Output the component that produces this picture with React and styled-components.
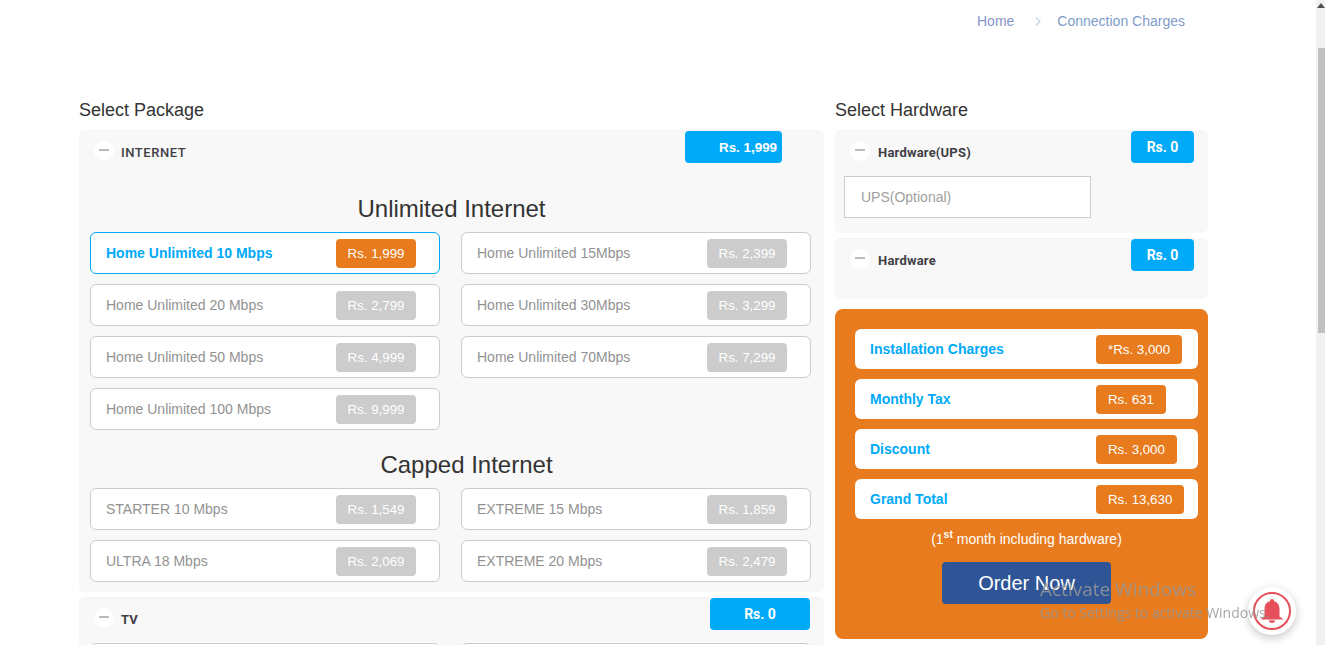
import React from "react";
import styled, { createGlobalStyle } from "styled-components";

const Global = createGlobalStyle`
  html, body { margin: 0; padding: 0; height: 645px; overflow: hidden; background: #fff; }
  body { font-family: "Liberation Sans", Arial, sans-serif; color: #333; }
  * { box-sizing: border-box; }
`;

const Page = styled.div`
  width: 1316px;
  height: 645px;
  overflow: hidden;
`;

const Breadcrumb = styled.nav`
  display: flex;
  justify-content: flex-end;
  align-items: center;
  height: 42px;
  padding-right: 131px;
  font-size: 14px;
  color: #7f9ccb;
`;

const Crumb = styled.span`
  color: ${(p) => p.$color || "#8496c8"};
`;

const Chevron = styled.svg`
  width: 6px;
  height: 9px;
  margin: 0 16px 0 21px;
`;

const Columns = styled.div`
  display: grid;
  grid-template-columns: 745px 373px;
  column-gap: 11px;
  padding: 58px 0 0 79px;
`;

const Column = styled.section`
  display: flex;
  flex-direction: column;
`;

const SectionTitle = styled.h2`
  margin: 0;
  height: 21px;
  margin-bottom: 9px;
  font-size: 18px;
  line-height: 21px;
  font-weight: 400;
  color: #333;
`;

const Panel = styled.div`
  background: #f8f8f8;
  border-radius: 6px;
  box-shadow: inset 0 3px 3px -2px rgba(0, 0, 0, 0.025);
  margin-bottom: 5px;
  height: ${(p) => p.$height}px;
  flex: none;
`;

const PanelHeader = styled.div`
  display: flex;
  align-items: flex-start;
  padding: 1px ${(p) => p.$right}px 0 15px;
  height: 46px;
`;

const MinusBadge = styled.span`
  flex: none;
  width: 20px;
  height: 20px;
  margin-top: 10px;
  border-radius: 50%;
  background: #fff;
  display: flex;
  align-items: center;
  justify-content: center;
  padding-bottom: 3px;
  &::before {
    content: "";
    width: 10px;
    height: 2px;
    background: #bbb;
  }
`;

const PanelName = styled.span`
  margin: 14px 0 0 ${(p) => p.$gap}px;
  font-family: Roboto, sans-serif;
  font-size: 13px;
  line-height: 16px;
  font-weight: ${(p) => p.$weight || 500};
  letter-spacing: ${(p) => p.$track || 0.2}px;
  color: #3f3f46;
`;

const HeaderPrice = styled.span`
  margin-left: auto;
  width: ${(p) => p.$width}px;
  height: 32px;
  padding-left: ${(p) => p.$indent || 0}px;
  border-radius: 4px;
  background: #00aaf8;
  color: #fff;
  font-size: ${(p) => (p.$indent ? 13.4 : 14)}px;
  font-family: ${(p) => (p.$serif ? '"Roboto", sans-serif' : '"Liberation Sans", sans-serif')};
  font-weight: 700;
  display: flex;
  align-items: center;
  justify-content: ${(p) => (p.$indent ? "flex-start" : "center")};
`;

const GroupTitle = styled.h3`
  margin: 0;
  padding-left: ${(p) => p.$shift || 0}px;
  height: ${(p) => p.$height}px;
  font-size: 24px;
  line-height: 28px;
  font-weight: 400;
  color: #333;
  text-align: center;
  display: flex;
  align-items: flex-end;
  justify-content: center;
`;

const PlanGrid = styled.div`
  display: grid;
  grid-template-columns: 350px 350px;
  column-gap: 21px;
  row-gap: 10px;
  padding: ${(p) => p.$top || 0}px 0 0 11px;
`;

const Plan = styled.div`
  height: 42px;
  display: flex;
  align-items: center;
  padding-left: 15px;
  background: #fff;
  border: 1px solid ${(p) => (p.$active ? "#00aaf8" : "#ccc")};
  border-radius: 6px;
`;

const PlanName = styled.span`
  width: 230px;
  flex: none;
  font-size: 14px;
  color: ${(p) => (p.$active ? "#00aaf8" : "#929292")};
  font-weight: ${(p) => (p.$active ? 700 : 400)};
`;

const Pill = styled.span`
  height: 29px;
  border-radius: 4px;
  background: ${(p) => p.$bg};
  color: #fff;
  font-size: 13.3px;
  display: inline-flex;
  align-items: center;
  justify-content: center;
  flex: none;
`;

const PlanPrice = styled(Pill)`
  width: 80px;
`;

const SelectBox = styled.div`
  width: 247px;
  height: 42px;
  margin-left: 9px;
  padding-left: 16px;
  display: flex;
  align-items: center;
  background: #fff;
  border: 1px solid #ccc;
  font-size: 14px;
  color: #a0a0a0;
`;

const Summary = styled.div`
  margin-top: 5px;
  height: 330px;
  background: #e87b1e;
  border-radius: 8px;
  padding: 20px 10px 0 20px;
  display: flex;
  flex-direction: column;
`;

const SummaryRow = styled.div`
  height: 40px;
  margin-bottom: 10px;
  background: #fff;
  border-radius: 6px;
  display: flex;
  align-items: center;
  padding-left: 15px;
`;

const SummaryLabel = styled.span`
  width: 226px;
  flex: none;
  font-size: 14px;
  font-weight: 700;
  color: #00aaf8;
`;

const SummaryPrice = styled(Pill)`
  padding: 0 12px;
`;

const Note = styled.p`
  margin: 0;
  height: 24px;
  font-size: 14px;
  line-height: 20px;
  text-align: center;
  color: #fff;
  sup { font-size: 10.5px; line-height: 0; font-weight: 700; }
`;

const OrderButton = styled.button`
  align-self: center;
  margin-top: 9px;
  width: 169px;
  height: 42px;
  border: 0;
  border-radius: 4px;
  background: #2f5597;
  color: #fff;
  font-family: "Liberation Sans", sans-serif;
  font-size: 20px;
`;

const Watermark = styled.div`
  position: fixed;
  left: 1040px;
  top: 576px;
  font-family: "Open Sans", sans-serif;
  color: rgba(150, 150, 150, 0.85);
  pointer-events: none;
  white-space: nowrap;
`;

const WatermarkTitle = styled.div`
  font-size: 19px;
  line-height: 27px;
`;

const WatermarkText = styled.div`
  font-size: 14px;
  line-height: 20px;
`;

const BellBubble = styled.div`
  position: fixed;
  left: 1248px;
  top: 587px;
  width: 48px;
  height: 48px;
  border-radius: 50%;
  background: #fff;
  box-shadow: 0 3px 10px rgba(0, 0, 0, 0.22);
  display: flex;
  align-items: center;
  justify-content: center;
`;

const BellRing = styled.div`
  width: 38px;
  height: 38px;
  border-radius: 50%;
  border: 2px solid #e5505a;
  display: flex;
  align-items: center;
  justify-content: center;
`;

const Scrollbar = styled.div`
  position: fixed;
  top: 0;
  right: 0;
  width: 9px;
  height: 645px;
  background: #f1f1f1;
`;

const ScrollArrow = styled.svg`
  position: absolute;
  left: 1px;
  top: 3px;
  width: 8px;
  height: 6px;
`;

const ScrollThumb = styled.div`
  position: absolute;
  top: 48px;
  left: 2px;
  width: 7px;
  height: 285px;
  background: #c1c1c1;
`;

const unlimited = [
  ["Home Unlimited 10 Mbps", "Rs. 1,999", true],
  ["Home Unlimited 15Mbps", "Rs. 2,399"],
  ["Home Unlimited 20 Mbps", "Rs. 2,799"],
  ["Home Unlimited 30Mbps", "Rs. 3,299"],
  ["Home Unlimited 50 Mbps", "Rs. 4,999"],
  ["Home Unlimited 70Mbps", "Rs. 7,299"],
  ["Home Unlimited 100 Mbps", "Rs. 9,999"],
];

const capped = [
  ["STARTER 10 Mbps", "Rs. 1,549"],
  ["EXTREME 15 Mbps", "Rs. 1,859"],
  ["ULTRA 18 Mbps", "Rs. 2,069"],
  ["EXTREME 20 Mbps", "Rs. 2,479"],
];

const summary = [
  ["Installation Charges", "*Rs. 3,000"],
  ["Monthly Tax", "Rs. 631"],
  ["Discount", "Rs. 3,000"],
  ["Grand Total", "Rs. 13,630"],
];

function Plans({ items, top }) {
  return (
    <PlanGrid $top={top}>
      {items.map(([name, price, active]) => (
        <Plan key={name} $active={active}>
          <PlanName $active={active}>{name}</PlanName>
          <PlanPrice $bg={active ? "#e87b1e" : "#ccc"}>{price}</PlanPrice>
        </Plan>
      ))}
    </PlanGrid>
  );
}

export default function App() {
  return (
    <>
      <Global />
      <Page>
        <Breadcrumb>
          <Crumb>Home</Crumb>
          <Chevron viewBox="0 0 6 9" fill="none" stroke="#c5cfe2" strokeWidth="1.2">
            <path d="M1 .8 5 4.5 1 8.2" />
          </Chevron>
          <Crumb $color="#7f9ccb">Connection Charges</Crumb>
        </Breadcrumb>
        <Columns>
          <Column>
            <SectionTitle>Select Package</SectionTitle>
            <Panel $height={462}>
              <PanelHeader $right={42}>
                <MinusBadge />
                <PanelName $gap={7} $track={0.55}>INTERNET</PanelName>
                <HeaderPrice $width={97} $indent={34}>Rs. 1,999</HeaderPrice>
              </PanelHeader>
              <GroupTitle $height={47}>Unlimited Internet</GroupTitle>
              <Plans items={unlimited} top={9} />
              <GroupTitle $height={49} $shift={30}>Capped Internet</GroupTitle>
              <Plans items={capped} top={9} />
            </Panel>
            <Panel $height={120}>
              <PanelHeader $right={14}>
                <MinusBadge />
                <PanelName $gap={7} $weight={700}>TV</PanelName>
                <HeaderPrice $width={100} $serif>Rs. 0</HeaderPrice>
              </PanelHeader>
              <Plans items={[["", ""], [" ", ""]]} />
            </Panel>
          </Column>
          <Column>
            <SectionTitle>Select Hardware</SectionTitle>
            <Panel $height={103}>
              <PanelHeader $right={14}>
                <MinusBadge />
                <PanelName $gap={8} $weight={700}>Hardware(UPS)</PanelName>
                <HeaderPrice $width={63} $serif>Rs. 0</HeaderPrice>
              </PanelHeader>
              <SelectBox>UPS(Optional)</SelectBox>
            </Panel>
            <Panel $height={61}>
              <PanelHeader $right={14}>
                <MinusBadge />
                <PanelName $gap={8} $weight={700}>Hardware</PanelName>
                <HeaderPrice $width={63} $serif>Rs. 0</HeaderPrice>
              </PanelHeader>
            </Panel>
            <Summary>
              {summary.map(([label, price]) => (
                <SummaryRow key={label}>
                  <SummaryLabel>{label}</SummaryLabel>
                  <SummaryPrice $bg="#e87b1e">{price}</SummaryPrice>
                </SummaryRow>
              ))}
              <Note>(1<sup>st</sup> month including hardware)</Note>
              <OrderButton>Order Now</OrderButton>
            </Summary>
          </Column>
        </Columns>
      </Page>
      <BellBubble>
        <BellRing>
          <svg width="24" height="24" viewBox="0 0 24 24" fill="#e5505a">
            <circle cx="12" cy="2" r="2" />
            <path d="M12 2C7.5 2 4.5 5 4.5 10v7.5L.5 20.5h23l-4-3V10C19.5 5 16.5 2 12 2z" />
            <path d="M9 21.3h6a3 2.6 0 0 1-6 0z" />
          </svg>
        </BellRing>
      </BellBubble>
      <Watermark>
        <WatermarkTitle>Activate Windows</WatermarkTitle>
        <WatermarkText>Go to Settings to activate Windows.</WatermarkText>
      </Watermark>
      <Scrollbar>
        <ScrollArrow viewBox="0 0 8 6" fill="#505050">
          <path d="M4 0 8 5H0z" />
        </ScrollArrow>
        <ScrollThumb />
      </Scrollbar>
    </>
  );
}
